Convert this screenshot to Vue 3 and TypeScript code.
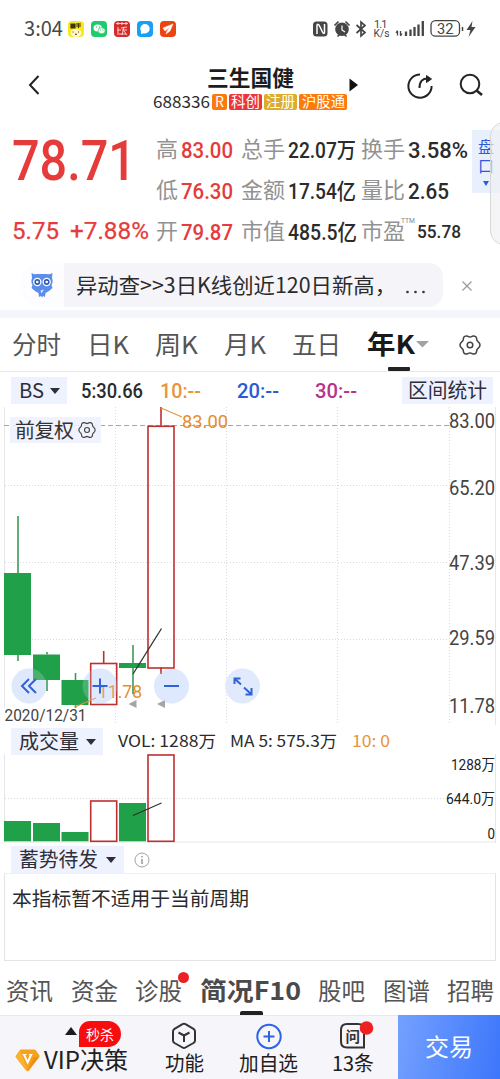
<script setup lang="ts">
import { h } from 'vue'

// A single line of text set to an exact advance width.
const Fit = (p: { t: string; w: number }) =>
  h('svg', { class: 'fit', width: p.w }, [
    h('text', { x: 0, y: '50%', dy: '0.365em', fill: 'currentColor', textLength: p.w, lengthAdjust: 'spacingAndGlyphs' }, p.t),
  ])
Fit.props = ['t', 'w']

interface Metric { label: string; lw: number; value: string; vw: number; kind: string }
const metrics: Metric[] = [
  { label: '高', lw: 22, value: '83.00', vw: 52, kind: 'gain' },
  { label: '总手', lw: 44, value: '22.07万', vw: 68, kind: 'flat' },
  { label: '换手', lw: 44, value: '3.58%', vw: 60, kind: 'flat' },
  { label: '低', lw: 22, value: '76.30', vw: 52, kind: 'gain' },
  { label: '金额', lw: 44, value: '17.54亿', vw: 68, kind: 'flat' },
  { label: '量比', lw: 44, value: '2.65', vw: 41, kind: 'flat' },
  { label: '开', lw: 22, value: '79.87', vw: 52, kind: 'gain' },
  { label: '市值', lw: 44, value: '485.5亿', vw: 69, kind: 'flat' },
  { label: '市盈', lw: 44, value: '55.78', vw: 44, kind: 'small' },
]

const periods = [
  { t: '分时', w: 49 }, { t: '日K', w: 42 }, { t: '周K', w: 43 },
  { t: '月K', w: 42 }, { t: '五日', w: 49 }, { t: '年K', w: 48, on: true },
]
const sections = [
  { t: '资讯', w: 47 }, { t: '资金', w: 47 }, { t: '诊股', w: 47, dot: true },
  { t: '简况F10', w: 101, on: true }, { t: '股吧', w: 47 }, { t: '图谱', w: 47 }, { t: '招聘', w: 47 },
]

const candles = [
  { x: 4.5, top: 573, bottom: 655, hi: 516, lo: 661, up: false },
  { x: 33.5, top: 654.5, bottom: 680, hi: 652, lo: 691, up: false },
  { x: 62, top: 680, bottom: 705, hi: 673, lo: 708, up: false },
  { x: 90.2, top: 663, bottom: 704, hi: 651, lo: 704, up: true },
  { x: 119.5, top: 663, bottom: 668, hi: 645, lo: 694, up: false },
  { x: 147.5, top: 425.8, bottom: 667.5, hi: 407, lo: 674, up: true },
]
const volumes = [
  { x: 4.5, top: 821, up: false }, { x: 33.5, top: 823, up: false }, { x: 62, top: 832, up: false },
  { x: 90.2, top: 801, up: true }, { x: 119.5, top: 803, up: false }, { x: 147.5, top: 755, up: true },
]
const prices = [
  { t: '83.00', y: 428 }, { t: '65.20', y: 494.5 }, { t: '47.39', y: 569.5 },
  { t: '29.59', y: 644.5 }, { t: '11.78', y: 712.5 },
]
const gear = 'M9.300 -2Q10.600 0 9.300 2L7 4.500L6.300 7.700Q5 9.400 3.200 9L0 7.900L-3.200 9Q-5 9.400 -6.300 7.700L-7 4.500L-9.300 2Q-10.600 0 -9.300 -2L-7 -4.500L-6.300 -7.700Q-5 -9.400 -3.200 -9L0 -7.900L3.200 -9Q5 -9.400 6.300 -7.700L7 -4.500Z'
</script>

<template>
  <div class="page">
    <header class="status">
      <Fit class="clock" t="3:04" :w="39" />
      <svg class="apps" width="109" height="16" viewBox="0 0 109 16">
        <rect width="16" height="16" rx="4" fill="#f8e71c" />
        <path d="M3 3h4v4H3zM8 3h5M8 5h5M10.5 2v5" stroke="#3b3510" stroke-width="1.2" fill="#3b3510" />
        <ellipse cx="8" cy="12" rx="5.5" ry="4" fill="#fff7c8" />
        <path d="M5 10.5v1M10.5 10.5v1M7 13q1 1 2 0" stroke="#40380c" fill="none" />
        <rect x="23" width="16" height="16" rx="4" fill="#1ecb6b" />
        <ellipse cx="29.7" cy="7" rx="4.2" ry="3.6" fill="#fff" />
        <ellipse cx="33.6" cy="9.7" rx="3.6" ry="3" fill="#fff" stroke="#1ecb6b" stroke-width=".7" />
        <path d="M28 6h1M31 6h1M32.2 9h.9M34.5 9h.9" stroke="#1ecb6b" />
        <rect x="46" width="16" height="16" rx="4" fill="#d42a2b" />
        <path d="M48 2.5h12M50 1v3M54 1v3M58 1v3M50 6v8M49 9h4M53 7l6-1M54 9h5M56 6l-2 8M56 10l3 4M51 13h7" stroke="#ffe3d8" stroke-width=".9" />
        <rect x="69" width="16" height="16" rx="4" fill="#19a0f5" />
        <circle cx="77" cy="7.7" r="4.7" fill="#fff" /><path d="M73 9v4l4-1z" fill="#fff" />
        <rect x="92" width="16" height="16" rx="4" fill="#e94412" />
        <path d="M95 7l10-4-3 7-4 3 1-3 3-4-5 4z" fill="#fff" stroke="#fff" stroke-width=".5" />
      </svg>
      <svg class="system" width="170" height="30" viewBox="310 14 170 30" fill="#454545">
        <rect x="313" y="21.500" width="14.500" height="15" rx="3.500" />
        <path d="M317 34v-8.500q0-2 2-.5l4 8q1.500 1 1.500-.5V24" fill="none" stroke="#fff" stroke-width="1.500" />
        <circle cx="342" cy="29.300" r="6.800" />
        <path d="M334.500 25.500l4-4M349.500 25.500l-4-4M337.500 36.500l2-2M346.500 36.500l-2-2" stroke="#454545" stroke-width="1.700" />
        <path d="M342 25.500v4.500l3 2" fill="none" stroke="#fff" stroke-width="1.200" />
        <path d="M356.500 25l8.500 7.500-4 3.500V22l4 3.500-8.500 7.500" fill="none" stroke="#454545" stroke-width="1.700" />
        <text x="374" y="28" font-size="11" textLength="13.500">1.1</text>
        <text x="373.500" y="37" font-size="11" textLength="16" lengthAdjust="spacingAndGlyphs">K/s</text>
        <path d="M397.500 31v4.500M400.500 31v4.500" stroke="#454545" stroke-width="1.300" fill="none" />
        <path d="M396 33l1.500-2.500M402 33.500l-1.500 2.500" stroke="#454545" stroke-width="1.200" />
        <path d="M406 31.500v4.500M410.500 29.500V36M414.500 27v9M418.500 24.500V36M422.800 21v15" stroke="#454545" stroke-width="2.300" fill="none" />
        <rect x="431" y="20.700" width="28.500" height="15.500" rx="4.500" fill="none" stroke="#454545" stroke-width="1.300" />
        <text x="437" y="33.700" font-size="14.500" textLength="16.500" lengthAdjust="spacingAndGlyphs">32</text>
        <path d="M462.500 27v4" stroke="#454545" stroke-width="1.500" />
        <path d="M472.500 21l-6 9h4l-2 7 7-10h-4z" />
      </svg>
    </header>

    <section class="title">
      <svg class="back" width="14" height="22" viewBox="0 0 14 22"><path d="M11.500 2L3 11l8.500 9" /></svg>
      <div class="name">
        <Fit class="stock" t="三生国健" :w="87" />
        <div class="codes">
          <Fit class="code" t="688336" :w="57" />
          <span class="tag orange r"><Fit t="R" :w="9" /></span>
          <span class="tag red"><Fit t="科创" :w="29" /></span>
          <span class="tag gold"><Fit t="注册" :w="29" /></span>
          <span class="tag orange long"><Fit t="沪股通" :w="43" /></span>
        </div>
      </div>
      <svg class="next" width="10" height="14" viewBox="0 0 10 14"><path d="M.5.500L9 7l-8.500 6.500z" /></svg>
      <svg class="tools" width="80" height="30" viewBox="405 70 80 30">
        <path d="M420 74.500a11.600 11.600 0 1 0 11.600 11.500" />
        <path d="M419.500 88q0-10 9-9.500" />
        <path d="M426.500 75.500l5 3.500-5 3.500z" fill="#242424" stroke-width="1" />
        <circle cx="470" cy="84" r="9.300" /><path d="M476.500 90.500l5.500 4.500" stroke-width="2.600" />
      </svg>
    </section>

    <section class="quote">
      <div class="last">
        <Fit class="price" t="78.71" :w="124" />
        <div class="change"><Fit t="5.75" :w="47" /><Fit t="+7.88%" :w="79" /></div>
      </div>
      <div class="metrics">
        <div v-for="m in metrics" :key="m.label" class="metric" :class="m.kind">
          <Fit class="label" :t="m.label" :w="m.lw" />
          <Fit v-if="m.kind === 'small'" class="ttm" t="TTM" :w="14" />
          <Fit class="value" :t="m.value" :w="m.vw" />
        </div>
      </div>
      <div class="side"><Fit t="盘" :w="16" /><Fit t="口" :w="16" />
        <svg width="6" height="5" viewBox="0 0 6 5"><path d="M0 0h6L3 5z" fill="#2c5bd9" /></svg>
      </div>
      <div class="drawer"></div>
    </section>

    <section class="news">
      <div class="pill">
        <div class="owl">
          <svg width="24" height="26" viewBox="0 0 24 26">
            <path d="M1.500 1Q5 3 7 2h10q2 1 5.500-1L22 6q1.500 4-.5 7l1 3-3.500 3-3.500 2-.5 4-2-1-1 1.500L11 24l-2 1-.5-4L5 19l-3.500-3 1-3q-2-3-.5-7z" fill="#5b8eea" />
            <circle cx="7.300" cy="10" r="4.200" fill="#fff" /><circle cx="16.700" cy="10" r="4.200" fill="#fff" />
            <circle cx="7.300" cy="10" r="2.100" fill="none" stroke="#3158b2" stroke-width="1.600" />
            <circle cx="16.700" cy="10" r="2.100" fill="none" stroke="#3158b2" stroke-width="1.600" />
            <path d="M10.500 18.500l3.500-1-2.500 4z" fill="#dce9ff" />
          </svg>
        </div>
        <Fit class="headline" t="异动查>>3日K线创近120日新高，" :w="320" />
        <svg class="more" width="22" height="4" viewBox="0 0 22 4"><circle cx="2.500" cy="2" r="1.300" /><circle cx="10.500" cy="2" r="1.300" /><circle cx="18.500" cy="2" r="1.300" /></svg>
      </div>
      <svg class="close" width="10" height="10" viewBox="0 0 10 10"><path d="M.5.500l9 9M9.500.500l-9 9" stroke="#999" stroke-width="1.200" /></svg>
    </section>

    <nav class="periods">
      <div v-for="p in periods" :key="p.t" class="period" :class="{ on: p.on }"><Fit :t="p.t" :w="p.w" /></div>
      <svg class="tick" width="13" height="7" viewBox="0 0 13 7"><path d="M0 0h13L6.500 6.500z" fill="#9ea3a8" /></svg>
      <svg class="cog" width="22" height="20" viewBox="-11 -10 22 20"><path :d="gear" /><circle r="2.800" /></svg>
    </nav>

    <section class="averages">
      <div class="chip bs"><Fit t="BS" :w="25" /><i class="caret"></i></div>
      <Fit class="avg a5" t="5:30.66" :w="62" />
      <Fit class="avg a10" t="10:--" :w="41" />
      <Fit class="avg a20" t="20:--" :w="42" />
      <Fit class="avg a30" t="30:--" :w="42" />
      <div class="chip range"><Fit t="区间统计" :w="79" /></div>
    </section>

    <svg class="chart" width="500" height="322" viewBox="0 404 500 322">
      <g class="grid">
        <path d="M115.500 407V725M226.500 407V725M337.500 407V725M449.500 407V725M5 485.500H449M5 562.500H449M5 639.500H449" stroke-dasharray="1 2" />
        <path class="edge" d="M4.500 407V708M495.500 407V725" />
      </g>
      <path d="M4 425.500H449" stroke="#92abc6" stroke-dasharray="5 3" />
      <rect x="10" y="417" width="91" height="26" fill="#eef1fd" opacity=".9" />
      <text class="cn" x="15" y="438" font-size="20" textLength="59">前复权</text>
      <g transform="translate(87 430) scale(.82)" fill="none" stroke="#444" stroke-width="1.400"><path :d="gear" /><circle r="3" /></g>
      <g fill="#e1e9fd">
        <circle cx="29" cy="686" r="17.500" /><circle cx="100" cy="686" r="17.500" />
        <circle cx="171.500" cy="686" r="17.500" /><circle cx="242.500" cy="686" r="17.500" />
      </g>
      <g v-for="c in candles" :key="c.x" :class="c.up ? 'rise' : 'fall'">
        <path :d="`M${c.x + 13.5} ${c.hi}V${c.top}M${c.x + 13.5} ${c.bottom}V${c.lo}`" />
        <rect :x="c.x + (c.up ? 0.5 : -0.5)" :y="c.top + (c.up ? 0.5 : 0)" :width="c.up ? 26 : 27" :height="c.bottom - c.top" />
      </g>
      <path d="M133 674L161.500 628.500" stroke="#303030" stroke-width="1.300" />
      <path d="M161 408L182 417M75 707L96 698" stroke="#e0973a" stroke-width="1.200" />
      <text class="mark" x="182" y="427.500" textLength="46" lengthAdjust="spacingAndGlyphs">83.00</text>
      <text class="mark" x="98" y="697.500" textLength="44" lengthAdjust="spacingAndGlyphs">11.78</text>
      <text v-for="p in prices" :key="p.t" class="axis" x="449" :y="p.y" textLength="46" lengthAdjust="spacingAndGlyphs">{{ p.t }}</text>
      <text class="date" x="4.500" y="721" textLength="82" lengthAdjust="spacingAndGlyphs">2020/12/31</text>
      <path d="M128.500 704l8-4v8zM157 704l8-4v8z" fill="#a5a5a5" />
      <g fill="#dce6ff" fill-opacity=".22">
        <circle cx="29" cy="686" r="17.500" /><circle cx="100" cy="686" r="17.500" />
        <circle cx="171.500" cy="686" r="17.500" />
      </g>
      <g fill="none" stroke="#3163d6" stroke-width="2">
        <path d="M29 679l-7 7 7 7M36 679l-7 7 7 7M92.500 686h15M100 678.500v15M164 686h15" />
        <path d="M234.500 684v-5.500h6M235 679l6 5.500M251.500 688v6.500h-6M251 694l-7-6.500" />
      </g>
    </svg>

    <section class="volhead">
      <div class="chip vol"><Fit t="成交量" :w="60" /><i class="caret"></i></div>
      <Fit class="v1" t="VOL: 1288万" :w="98" />
      <Fit class="v2" t="MA 5: 575.3万" :w="107" />
      <Fit class="v3" t="10: 0" :w="38" />
    </section>

    <svg class="chart" width="500" height="89" viewBox="0 754 500 89">
      <g class="grid">
        <path d="M5 798.500H449" stroke-dasharray="1 2" />
        <path class="edge" d="M4.500 754V842.500M495.500 754V842.500M4 842H496" />
      </g>
      <g v-for="v in volumes" :key="v.x" :class="v.up ? 'rise' : 'fall'">
        <rect :x="v.x + (v.up ? 0.5 : -0.5)" :y="v.top" :width="v.up ? 26 : 27" :height="841.3 - v.top" />
      </g>
      <path d="M133 815.500L161.500 803" stroke="#303030" stroke-width="1.300" />
      <text class="vaxis" x="451" y="770" textLength="44" lengthAdjust="spacingAndGlyphs">1288万</text>
      <text class="vaxis" x="446" y="804" textLength="49" lengthAdjust="spacingAndGlyphs">644.0万</text>
      <text class="vaxis" x="487.500" y="839" textLength="7.500" lengthAdjust="spacingAndGlyphs">0</text>
    </svg>

    <section class="signal">
      <div class="chip sig"><Fit t="蓄势待发" :w="79" /><i class="caret"></i></div>
      <svg width="16" height="16" viewBox="0 0 16 16"><circle cx="8" cy="8" r="7" fill="none" stroke="#a3a3a3" /><path d="M8 7v5M8 4v1.500" stroke="#888" stroke-width="1.300" /></svg>
    </section>
    <div class="notice"><Fit t="本指标暂不适用于当前周期" :w="237" /></div>

    <nav class="sections">
      <div v-for="s in sections" :key="s.t" class="section" :class="{ on: s.on }">
        <Fit :t="s.t" :w="s.w" /><i v-if="s.dot" class="dot"></i>
      </div>
    </nav>

    <footer class="bottom">
      <div class="vip">
        <svg class="fold" width="12" height="8" viewBox="0 0 12 8"><path d="M0 8L6 0l6 8z" fill="#1b1b1b" /></svg>
        <span class="sale"><Fit t="秒杀" :w="28" /></span>
        <div class="vipline">
          <svg width="25" height="23" viewBox="0 0 25 23">
            <path d="M6 .5h13q1 0 2 1l3.500 5q.5 1-.5 2L14 21.500q-1.500 1.500-3 0L1 8.500q-1-1 0-2l3.500-5Q5 .5 6 .5z" fill="#f6a21b" />
            <path d="M12.500 22L1 8l4-7z" fill="#fcc242" opacity=".6" /><path d="M12.500 22L24 8h-5z" fill="#e88210" opacity=".6" />
            <path d="M7.500 5.500h4M14 5.500h3.500" stroke="#fff" stroke-width="1.200" /><path d="M9 5.500l3.600 8 3.600-8" fill="none" stroke="#fff" stroke-width="1.900" />
          </svg>
          <Fit t="VIP决策" :w="84" />
        </div>
      </div>
      <div class="item fn">
        <svg width="28" height="28" viewBox="0 0 28 28"><path d="M12.500 2.200q1.500-.8 3 0l8 4.600q1.500.9 1.500 2.600v9q0 1.700-1.500 2.600l-8 4.500q-1.500.9-3 0l-8-4.500Q3 20.100 3 18.400v-9q0-1.700 1.500-2.600zM8.500 10.500l5.500 3 5.500-3M14 13.500v6.500" fill="none" stroke="#333" stroke-width="2" /></svg>
        <Fit t="功能" :w="39" />
      </div>
      <div class="item add">
        <svg width="28" height="28" viewBox="0 0 28 28"><path d="M8.500 14.500h11M14 9v11" stroke="#2c63e8" stroke-width="2" /><circle cx="14" cy="14.500" r="11.700" fill="none" stroke="#2c63e8" stroke-width="2" /></svg>
        <Fit t="加自选" :w="59" />
      </div>
      <div class="item ask">
        <svg class="bubble" width="40" height="28" viewBox="0 0 40 28">
          <path d="M31 12v13.500H14q-6 0-6-6V8q0-6 6-6h11q6 0 6 6z" fill="none" stroke="#333" stroke-width="2" />
          <text class="cn" x="12.500" y="19.500" font-size="14.500" font-weight="700">问</text>
          <circle cx="33.500" cy="6" r="6.800" fill="#f02020" />
        </svg>
        <Fit t="13条" :w="42" />
      </div>
      <div class="trade"><Fit t="交易" :w="48" /></div>
    </footer>
  </div>
</template>

<style>
body { background: #fff; }
.fit { display: block; flex: none; height: 1.2em; overflow: visible; }
</style>

<style scoped>
.page { width: 500px; height: 1079px; overflow: hidden; background: #fff; color: #2b2b2b; font-family: "Noto Sans CJK SC", sans-serif; }
.status { height: 58px; display: flex; align-items: center; padding: 0 20px 0 24px; box-sizing: border-box; color: #484848; font-family: Roboto, sans-serif; }
.clock { font-size: 20px; font-family: "Noto Sans CJK SC", sans-serif; }
.apps { margin-left: 5px; }
.system { margin-left: auto; }

.title { height: 64px; display: flex; position: relative; }
.back { margin: 16px 0 0 27px; fill: none; stroke: #222; stroke-width: 2; }
.name { margin-left: 112px; width: 196px; display: flex; flex-direction: column; padding-top: 7px; }
.stock { margin-left: 54px; font-size: 22px; font-weight: 700; color: #1d1d1d; }
.codes { display: flex; align-items: center; gap: 2px; height: 17px; margin-top: 2px; }
.code { font-size: 16.5px; }
.tag { height: 16px; width: 33px; display: flex; align-items: center; justify-content: center; border-radius: 2px; color: #fff; font-size: 14.5px; }
.tag.r { width: 15px; }
.tag.long { width: 48px; }
.orange { background: #fb7a0c; }
.red { background: #ed333c; }
.gold { background: #dcac2c; }
.next { margin: 20px 0 0; fill: #111; }
.tools { margin: 12px 0 0 46px; fill: none; stroke: #242424; stroke-width: 2; }

.quote { height: 128px; display: flex; position: relative; font-family: Roboto, "Noto Sans CJK SC", sans-serif; font-weight: 500; }
.last { width: 156px; flex: none; box-sizing: border-box; padding: 5px 0 0 12px; color: #e63b3b; }
.price { font-size: 55px; font-weight: 500; }
.change { display: flex; gap: 11px; font-size: 24.5px; font-weight: 400; margin-top: 22px; }
.change .fit { stroke: currentColor; stroke-width: .25px; }
.metrics { display: grid; grid-template-columns: 85px 120px 110px; grid-template-rows: repeat(3, 41px); padding-top: 7px; width: 315px; flex: none; }
.metric { display: flex; align-items: center; gap: 3px; position: relative; }
.label { color: #929292; font-size: 22px; font-weight: 400; }
.value { font-size: 21.5px; }
.gain .value { color: #e63b3b; }
.small .value { font-size: 19px; margin-left: 9px; }
.ttm { position: absolute; left: 40px; top: 4px; font-size: 8px; color: #888; font-weight: 400; }
.side { width: 28px; flex: none; height: 63px; margin: 8px 0 0 1px; background: #e9f0fd; color: #2c5bd9; display: flex; flex-direction: column; align-items: center; font-size: 16px; font-weight: 400; padding-top: 8px; box-sizing: border-box; }
.side svg:last-child { margin-top: 5px; }
.drawer { position: absolute; left: 490px; top: 0; width: 30px; height: 121px; background: rgba(240, 240, 242, .65); border: 1px solid #d8d8da; border-radius: 14px; }

.news { height: 60px; margin-top: 8px; padding: 5px 0 0 20px; box-sizing: border-box; display: flex; align-items: flex-start; border-bottom: 8px solid #f5f6fb; }
.pill { width: 423px; height: 44px; display: flex; align-items: center; background: #f4f4f9; border-radius: 22px 14px 14px 22px; }
.owl { width: 44px; height: 44px; flex: none; background: #fdfdff; border-radius: 22px 0 0 22px; display: flex; align-items: center; justify-content: center; }
.headline { font-size: 21px; margin: 2px 0 0 12px; }
.more { margin: 14px 0 0 9px; fill: #333; }
.close { margin: 18px 0 0 19px; }

.periods { height: 54px; border-bottom: 1px solid #e9e9ec; box-sizing: border-box; display: flex; align-items: center; padding-left: 12px; font-size: 24.5px; color: #555; }
.period { height: 54px; display: flex; align-items: center; margin-right: 26px; position: relative; }
.period.on { margin-right: 1px; color: #191919; font-weight: 700; font-size: 26px; }
.period.on::after { content: ""; position: absolute; left: 21px; bottom: 1px; width: 22px; height: 4px; border-radius: 1px; background: #222; }
.cog { margin-left: 30px; fill: none; stroke: #444; stroke-width: 1.5; stroke-linejoin: round; }

.chip { height: 27px; background: #eef1fe; display: flex; align-items: center; box-sizing: border-box; color: #2e2e38; font-size: 20px; padding-top: 1px; }
.caret { border: 5px solid transparent; border-top: 6px solid #2e2e38; border-bottom: 0; flex: none; }
.averages { height: 32px; padding: 4px 0 0 11px; box-sizing: border-box; display: flex; align-items: center; }
.bs { width: 56px; padding-left: 8px; gap: 6px; font-size: 20px; }
.avg { font-family: Roboto, sans-serif; font-size: 20.5px; font-weight: 500; }
.a5 { margin-left: 14px; }
.a10 { margin-left: 17px; color: #e8943a; }
.a20 { margin-left: 36px; color: #2c5bd0; }
.a30 { margin-left: 36px; color: #b8338c; }
.range { width: 91px; margin-left: 45px; padding-left: 6px; }

.chart { display: block; font-family: Roboto, "Noto Sans CJK SC", sans-serif; fill: #444; }
.cn { font-family: "Noto Sans CJK SC", sans-serif; fill: #333; }
.grid { fill: none; stroke: #d9d9dc; }
.edge { stroke: #e6e6e8; }
.rise { fill: none; stroke: #bd3030; stroke-width: 1.6; }
.fall path { stroke: #3c9a58; stroke-width: 1.6; }
.fall rect { fill: #20a048; }
.mark { font-size: 19px; fill: #e58e2d; }
.axis { font-size: 19.5px; fill: #444; }
.date { font-size: 16.5px; fill: #444; }
.vaxis { font-size: 14.5px; fill: #222; }

.volhead { height: 28px; padding-left: 11px; box-sizing: border-box; display: flex; align-items: center; font-size: 16px; padding-top: 3px; }
.vol { width: 92px; padding-left: 8px; gap: 7px; }
.v1 { margin-left: 15px; }
.v2 { margin-left: 14px; }
.v3 { margin-left: 15px; color: #e8943a; }

.signal { height: 30px; padding: 3px 0 0 11px; box-sizing: border-box; display: flex; align-items: center; gap: 10px; }
.sig { width: 113px; padding-left: 8px; gap: 8px; }
.notice { height: 88px; margin: 0 4px; box-sizing: border-box; border: 1px solid #e4e4e6; border-top-color: #f0f0f2; padding: 13px 0 0 7px; font-size: 19.7px; }

.sections { height: 54px; display: flex; align-items: center; gap: 17.5px; padding: 6px 0 0 6px; box-sizing: border-box; font-size: 23.5px; color: #555; }
.section { height: 48px; display: flex; align-items: center; position: relative; }
.section.on { color: #4a4a4a; font-weight: 700; font-size: 25px; }
.section.on::after { content: ""; position: absolute; left: 40px; bottom: 0; width: 23px; height: 4px; background: #222; border-radius: 2px 2px 0 0; }
.dot { position: absolute; left: 43px; top: 5px; width: 11px; height: 11px; border-radius: 50%; background: #ee2024; }

.bottom { height: 64px; display: flex; background: #f5f5fa; border-top: 1px solid #e9e9ee; box-sizing: border-box; color: #202020; }
.vip { width: 140px; position: relative; padding: 30px 0 0 15px; box-sizing: border-box; font-size: 24px; }
.vipline { display: flex; align-items: center; gap: 4px; }
.fold { position: absolute; left: 65px; top: 11px; }
.sale { position: absolute; left: 79px; top: 5px; width: 42px; height: 26px; background: #f70d0d; border-radius: 11px 13px 13px 0; color: #fff; font-size: 14px; display: flex; align-items: center; justify-content: center; }
.item { display: flex; flex-direction: column; align-items: center; padding-top: 6px; font-size: 20px; box-sizing: border-box; }
.item .fit { margin-top: 2px; }
.fn { width: 90px; }
.add { width: 80px; }
.ask { width: 90px; }
.bubble { overflow: visible; }
.trade { width: 102px; margin-top: -1px; height: 64px; flex: none; margin-left: auto; background: linear-gradient(100deg, #74a1ff, #3c76fb); display: flex; align-items: center; justify-content: center; color: #fff; font-size: 24px; }
</style>
